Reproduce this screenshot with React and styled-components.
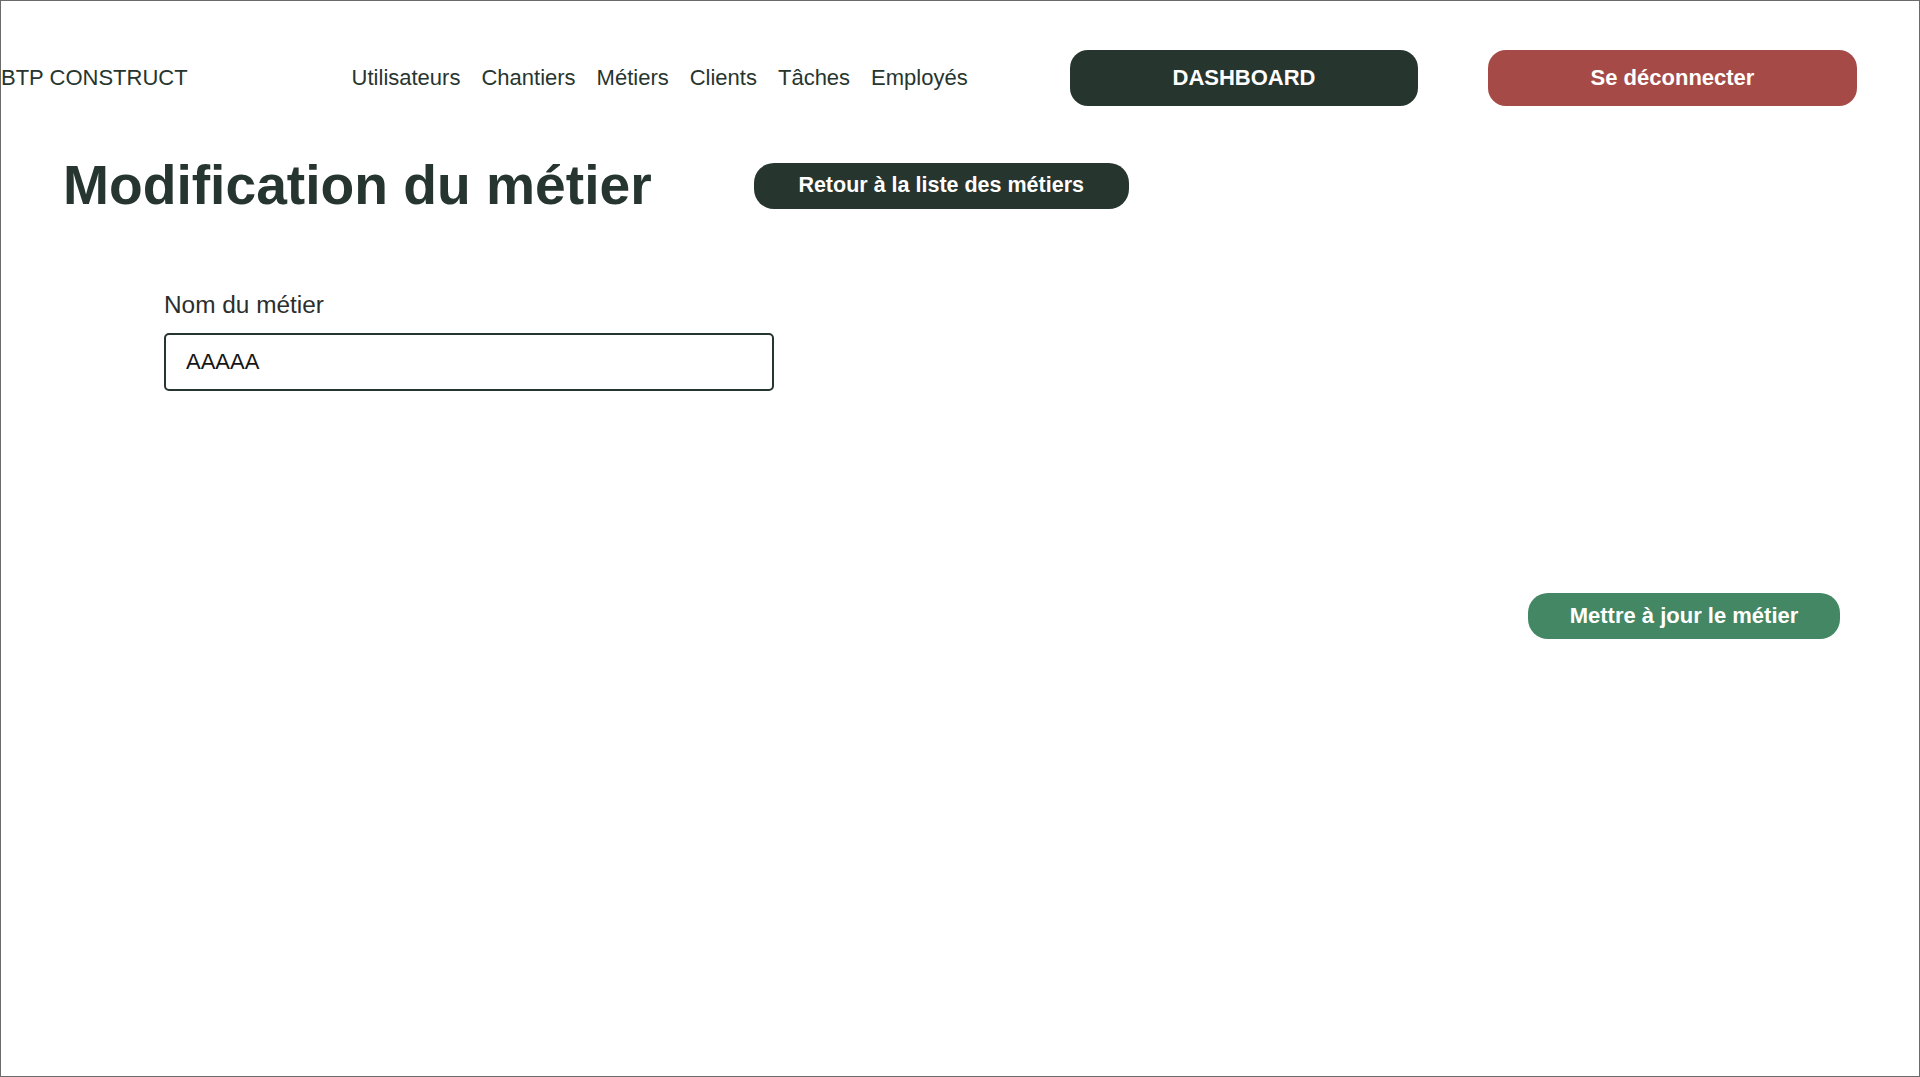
import React, { useState } from 'react'
import styled, { createGlobalStyle } from 'styled-components'

const GlobalStyle = createGlobalStyle`
    * {
        box-sizing: border-box;
    }
    body {
        margin: 0;
        background: #ffffff;
        font-family: "Liberation Sans", Arial, Helvetica, sans-serif;
        color: #27352f;
    }
`

const Frame = styled.div`
    height: 100vh;
    border: 1px solid #6b6b6b;
    background: #ffffff;
    overflow: hidden;
`

const Header = styled.header`
    display: flex;
    align-items: center;
    padding: 49px 62px 0 0;
`

const Logo = styled.div`
    font-size: 22px;
    color: #27352f;
    white-space: nowrap;
`

const Nav = styled.nav`
    display: flex;
    gap: 21px;
    margin-left: 164px;
`

const NavLink = styled.a`
    font-size: 22px;
    color: #27352f;
    text-decoration: none;
    cursor: pointer;
`

const Actions = styled.div`
    display: flex;
    gap: 70px;
    margin-left: auto;
`

const PillButton = styled.button`
    display: flex;
    align-items: center;
    justify-content: center;
    width: ${(p) => p.$width}px;
    height: ${(p) => p.$height || 46}px;
    border: none;
    border-radius: ${(p) => p.$radius || 20}px;
    background: ${(p) => p.$bg || '#27352f'};
    color: #ffffff;
    font-family: inherit;
    font-size: ${(p) => p.$size || 22}px;
    font-weight: 700;
    cursor: pointer;
    white-space: nowrap;
`

const TitleRow = styled.div`
    display: flex;
    align-items: center;
    padding-left: 62px;
    margin-top: 52px;
`

const Title = styled.h1`
    margin: 0 102px 0 0;
    font-size: 55.2px;
    line-height: 1;
    font-weight: 700;
    color: #26352f;
`

const Form = styled.form`
    padding-left: 163px;
    margin-top: 78px;
`

const Label = styled.label`
    display: block;
    font-size: 24.4px;
    color: #2b2e2d;
    margin-bottom: 14px;
`

const Input = styled.input`
    display: block;
    width: 610px;
    height: 58px;
    padding: 0 20px;
    border: 2px solid #27352f;
    border-radius: 5px;
    font-family: inherit;
    font-size: 22px;
    color: #151515;
    outline: none;
`

const Footer = styled.div`
    display: flex;
    justify-content: flex-end;
    padding-right: 79px;
    margin-top: 202px;
`

const links = ['Utilisateurs', 'Chantiers', 'Métiers', 'Clients', 'Tâches', 'Employés']

const App = () => {
    const [name, setName] = useState('AAAAA')

    return (
        <>
            <GlobalStyle />
            <Frame>
                <Header>
                    <Logo>BTP CONSTRUCT</Logo>
                    <Nav>
                        {links.map((l) => (
                            <NavLink key={l}>{l}</NavLink>
                        ))}
                    </Nav>
                    <Actions>
                        <PillButton $width={348} $height={56} $radius={18}>DASHBOARD</PillButton>
                        <PillButton $width={369} $height={56} $radius={18} $bg="#a54a46">
                            Se déconnecter
                        </PillButton>
                    </Actions>
                </Header>

                <TitleRow>
                    <Title>Modification du métier</Title>
                    <PillButton $width={375} $size={21.5}>Retour à la liste des métiers</PillButton>
                </TitleRow>

                <Form onSubmit={(e) => e.preventDefault()}>
                    <Label htmlFor="nom">Nom du métier</Label>
                    <Input id="nom" value={name} onChange={(e) => setName(e.target.value)} />
                    <Footer>
                        <PillButton type="submit" $width={312} $bg="#438764">
                            Mettre à jour le métier
                        </PillButton>
                    </Footer>
                </Form>
            </Frame>
        </>
    )
}

export default App
